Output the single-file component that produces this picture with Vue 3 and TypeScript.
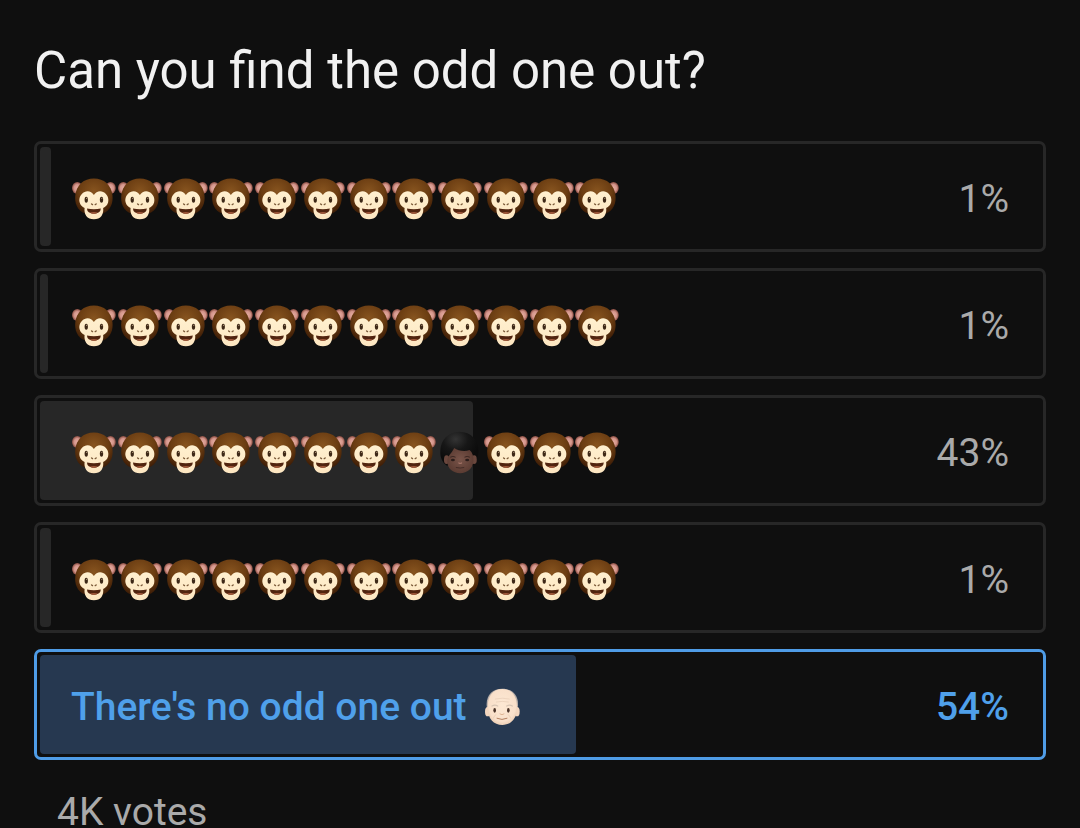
<script setup lang="ts">
import { ref } from 'vue'

type Glyph = 'monkey' | 'person' | 'elder'

interface PollOption {
  label?: string
  glyphs: Glyph[]
  percent: number
  share: number
}

const monkeys = (count: number): Glyph[] => Array.from({ length: count }, () => 'monkey')

const names: Record<Glyph, string> = {
  monkey: 'monkey face',
  person: 'person',
  elder: 'older man',
}

const options: PollOption[] = [
  { glyphs: monkeys(12), percent: 1, share: 1.1 },
  { glyphs: monkeys(12), percent: 1, share: 0.8 },
  { glyphs: [...monkeys(8), 'person', ...monkeys(3)], percent: 43, share: 43.3 },
  { glyphs: monkeys(12), percent: 1, share: 1.1 },
  { label: "There's no odd one out", glyphs: ['elder'], percent: 54, share: 53.6 },
]

const selected = ref(4)
</script>

<template>
  <main class="poll">
    <svg class="defs" aria-hidden="true">
      <defs>
        <radialGradient id="fur" cx="50%" cy="35%" r="66%">
          <stop offset="0" stop-color="#87541f" />
          <stop offset="0.6" stop-color="#6b3d12" />
          <stop offset="1" stop-color="#3c1c06" />
        </radialGradient>
        <linearGradient id="cream" x1="0" y1="0" x2="0" y2="1">
          <stop offset="0" stop-color="#fff0cf" />
          <stop offset="1" stop-color="#fde6c1" />
        </linearGradient>
        <radialGradient id="ear" cx="50%" cy="50%" r="50%">
          <stop offset="0" stop-color="#e6aca0" />
          <stop offset="0.6" stop-color="#d3948a" />
          <stop offset="1" stop-color="#8a4d42" />
        </radialGradient>
        <radialGradient id="hair" cx="40%" cy="22%" r="65%">
          <stop offset="0" stop-color="#343434" />
          <stop offset="0.5" stop-color="#171717" />
          <stop offset="1" stop-color="#0b0b0b" />
        </radialGradient>
        <radialGradient id="dark-skin" cx="50%" cy="45%" r="60%">
          <stop offset="0" stop-color="#795449" />
          <stop offset="1" stop-color="#583930" />
        </radialGradient>
        <radialGradient id="light-skin" cx="50%" cy="45%" r="60%">
          <stop offset="0" stop-color="#fde8d3" />
          <stop offset="0.75" stop-color="#f9e0ca" />
          <stop offset="1" stop-color="#e6c7ad" />
        </radialGradient>
      </defs>
      <symbol id="monkey" viewBox="0 0 138 138">
        <ellipse cx="19" cy="36" rx="16" ry="18" fill="url(#ear)" />
        <ellipse cx="119" cy="36" rx="16" ry="18" fill="url(#ear)" />
        <path d="M69 7C100 7 121 27 125 57C128 81 119 103 98 112C80 119 58 119 40 112C19 103 10 81 13 57C17 27 38 7 69 7Z" fill="url(#fur)" />
        <path d="M69 57C75 47 87 43 97 48C110 54 115 68 112 79C110 88 104 93 97 96C98 104 97 113 92 120C87 127 79 130 69 130C59 130 51 127 46 120C41 113 40 104 41 96C34 93 28 88 26 79C23 68 28 54 41 48C51 43 63 47 69 57Z" fill="url(#cream)" />
        <ellipse cx="46" cy="71" rx="5" ry="9" fill="#3d2817" />
        <ellipse cx="92" cy="71" rx="5" ry="9" fill="#3d2817" />
        <circle cx="47" cy="67" r="2" fill="#b69c7c" />
        <circle cx="93" cy="67" r="2" fill="#b69c7c" />
        <path d="M62 84L65 86M76 84L73 86" stroke="#7b5a39" stroke-width="4" stroke-linecap="round" />
        <path d="M48 98Q69 102 90 98Q89 113 69 114Q49 113 48 98Z" fill="#51240f" />
        <path d="M57 110Q69 106 81 110Q77 114 69 114Q61 114 57 110Z" fill="#a35a3c" />
      </symbol>
      <symbol id="person" viewBox="0 0 138 138">
        <path d="M68 5C103 5 126 31 125 63C125 83 118 99 108 107H29C16 98 9 81 10 63C11 30 34 5 68 5Z" fill="url(#hair)" />
        <ellipse cx="29" cy="89" rx="8" ry="13" fill="#6a473d" />
        <ellipse cx="112" cy="89" rx="8" ry="13" fill="#6a473d" />
        <path d="M52 54C63 63 85 66 98 60C107 67 111 80 110 94C108 116 91 130 70 130C48 130 32 117 31 95C30 79 43 72 52 54Z" fill="url(#dark-skin)" />
        <path d="M41 81Q48 77 55 81M84 81Q91 77 98 81" fill="none" stroke="#3a2621" stroke-width="3" stroke-linecap="round" />
        <ellipse cx="48" cy="90" rx="6" ry="4" fill="#2b1d1b" />
        <ellipse cx="91" cy="90" rx="6" ry="4" fill="#2b1d1b" />
        <path d="M66 99Q70 102 74 99" fill="none" stroke="#a17164" stroke-width="4" stroke-linecap="round" />
        <path d="M58 113Q70 116 81 113" fill="none" stroke="#432b26" stroke-width="3" stroke-linecap="round" />
      </symbol>
      <symbol id="elder" viewBox="0 0 138 138">
        <path d="M70 14C99 14 119 33 117 65L114 84H26L23 65C21 33 41 14 70 14Z" fill="#b9b0aa" />
        <ellipse cx="26" cy="83" rx="8" ry="14" fill="#f3d6bf" />
        <ellipse cx="114" cy="83" rx="8" ry="14" fill="#f3d6bf" />
        <path d="M70 15C98 15 114 35 114 67C116 101 97 123 70 123C43 123 24 101 26 67C26 35 42 15 70 15Z" fill="url(#light-skin)" />
        <path d="M49 45Q70 40 91 45M52 54Q70 50 88 54" fill="none" stroke="#e6cbb5" stroke-width="2" stroke-linecap="round" />
        <path d="M39 66Q48 61 56 66M83 66Q92 61 100 66" fill="none" stroke="#d8c5b4" stroke-width="4" stroke-linecap="round" />
        <ellipse cx="47" cy="79" rx="4" ry="7" fill="#4a3328" />
        <ellipse cx="88" cy="79" rx="4" ry="7" fill="#4a3328" />
        <path d="M63 90Q69 95 75 90" fill="none" stroke="#dfb595" stroke-width="3" stroke-linecap="round" />
        <path d="M54 103Q69 110 84 103" fill="none" stroke="#b48263" stroke-width="3" stroke-linecap="round" />
        <path d="M52 91Q44 96 43 103M86 91Q94 96 95 103" fill="none" stroke="#e6c8ae" stroke-width="2" />
      </symbol>
    </svg>

    <h1 class="question">Can you find the odd one out?</h1>

    <div class="options">
      <button
        v-for="(option, index) in options"
        :key="index"
        type="button"
        class="option"
        :class="{ selected: selected === index }"
        :aria-pressed="selected === index"
        @click="selected = index"
      >
        <span class="track"><span class="fill" :style="{ width: option.share + '%' }"></span></span>
        <span v-if="option.label" class="label">{{ option.label }}</span>
        <span class="glyphs" :class="{ row: option.glyphs.length > 1 }">
          <svg v-for="(glyph, i) in option.glyphs" :key="i" class="glyph" role="img" :aria-label="names[glyph]">
            <use :href="'#' + glyph" />
          </svg>
        </span>
        <span class="percent">{{ option.percent }}%</span>
      </button>
    </div>

    <p class="votes">4K votes</p>
  </main>
</template>

<style>
body {
  background: #0f0f0f;
}
</style>

<style scoped>
.poll {
  padding: 41px 34px 0;
  font-family: Roboto, "Liberation Sans", sans-serif;
  color: #aaaaaa;
}

.defs {
  position: absolute;
  width: 0;
  height: 0;
}

.question {
  margin: 0 0 40px;
  font-size: 51px;
  line-height: 60px;
  font-weight: 400;
  color: #f1f1f1;
}

.options {
  display: flex;
  flex-direction: column;
  gap: 16px;
}

.option {
  position: relative;
  display: flex;
  align-items: center;
  padding: 32px 34px 27px;
  border: 3px solid #272727;
  border-radius: 7px;
  background: transparent;
  font-family: inherit;
  font-size: 39px;
  line-height: 46px;
  font-weight: 400;
  color: inherit;
  text-align: left;
  cursor: pointer;
}

.track {
  position: absolute;
  inset: 3px;
}

.fill {
  display: block;
  height: 100%;
  border-radius: 4px;
  background: #272727;
}

.label,
.glyphs,
.percent {
  position: relative;
}

.label {
  margin-right: 12px;
}

.glyphs {
  display: flex;
}

.glyphs.row {
  width: 549px;
}

.glyph {
  width: 46px;
  height: 46px;
  min-width: 0;
}

.row .glyph {
  flex: 1 1 0;
}

.percent {
  margin-left: auto;
}

.selected {
  border-color: #4f9ce6;
  font-weight: 500;
  color: #4fa0ea;
}

.selected .fill {
  background: #263850;
}

.votes {
  margin: 36px 0 0 23px;
  font-size: 39px;
  line-height: 32px;
}
</style>
